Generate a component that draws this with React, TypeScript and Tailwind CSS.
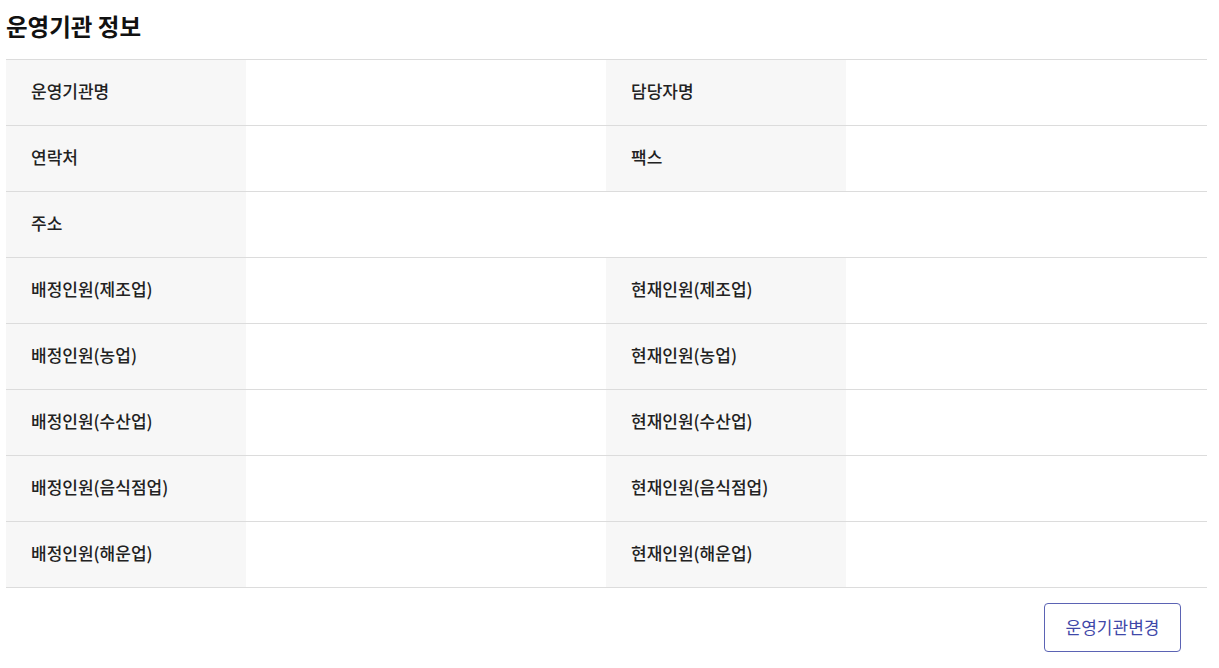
import React from 'react';

const rows: [string, string | null][] = [
  ['운영기관명', '담당자명'],
  ['연락처', '팩스'],
  ['주소', null],
  ['배정인원(제조업)', '현재인원(제조업)'],
  ['배정인원(농업)', '현재인원(농업)'],
  ['배정인원(수산업)', '현재인원(수산업)'],
  ['배정인원(음식점업)', '현재인원(음식점업)'],
  ['배정인원(해운업)', '현재인원(해운업)'],
];

export default function App() {
  return (
    <div
      className="w-[1219px] h-[668px] bg-white px-[6px] pt-[11px] text-[#222]"
      style={{ fontFamily: '"Noto Sans CJK KR", "Noto Sans", sans-serif' }}
    >
      {/* Title */}
      <h2 className="h-[30px] text-[23.5px] leading-[30px] font-semibold text-[#111]">
        운영기관 정보
      </h2>

      {/* Info table */}
      <div className="mt-[18px] w-[1201px] border-t border-[#dcdcdc]">
        {rows.map(([left, right], idx) => (
          <div
            key={idx}
            className="grid h-[66px] grid-cols-[240px_360px_240px_361px] border-b border-[#dcdcdc]"
          >
            <div className="flex items-center bg-[#f7f7f7] pb-[3px] pl-[25px] text-[17px] font-medium">
              {left}
            </div>
            <div />
            {right ? (
              <>
                <div className="flex items-center bg-[#f7f7f7] pb-[3px] pl-[25px] text-[17px] font-medium">
                  {right}
                </div>
                <div />
              </>
            ) : (
              <div className="col-span-2" />
            )}
          </div>
        ))}
      </div>

      {/* Actions */}
      <div className="mt-[15px] flex w-[1201px] justify-end pr-[26px]">
        <button className="h-[49px] w-[137px] rounded-[4px] border border-[#5b63b4] bg-white pb-[2px] text-[17px] text-[#3f48a8]">
          운영기관변경
        </button>
      </div>
    </div>
  );
}
